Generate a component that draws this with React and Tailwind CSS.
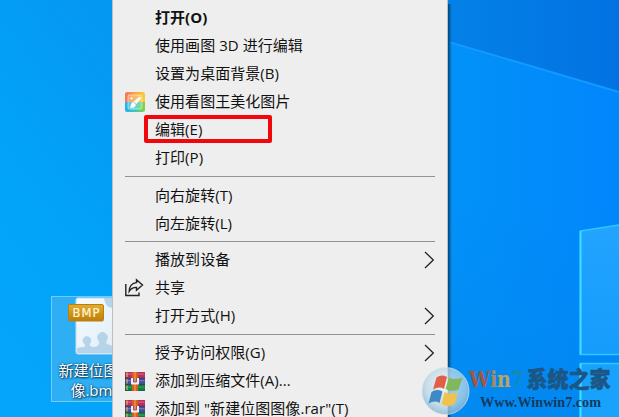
import React from 'react';

const FONT = "font-['Open_Sans','Noto_Sans_CJK_SC',sans-serif]";

function PictureKingIcon() {
  return (
    <svg width="20" height="20" viewBox="0 0 20 20">
      <defs>
        <clipPath id="pk">
          <rect width="20" height="20" rx="2" />
        </clipPath>
        <linearGradient id="pkTop" x1="0" y1="0" x2="1" y2="0">
          <stop offset="0" stopColor="#f0785e" />
          <stop offset=".5" stopColor="#fba63c" />
          <stop offset="1" stopColor="#f6d02c" />
        </linearGradient>
        <linearGradient id="pkBottom" x1="0" y1="0" x2="1" y2="0">
          <stop offset="0" stopColor="#25aef0" />
          <stop offset=".5" stopColor="#3cc7c0" />
          <stop offset="1" stopColor="#86d239" />
        </linearGradient>
      </defs>
      <g clipPath="url(#pk)">
        <rect width="20" height="11" fill="url(#pkTop)" />
        <rect y="10" width="20" height="10" fill="url(#pkBottom)" />
        <rect x="3" y="3" width="14" height="14" rx="1.5" fill="#fff" fillOpacity=".22" stroke="#fff" strokeOpacity=".5" />
        <path d="M14.800 4.500 8.600 9.400l2.600 2.600 4.900-5.600z" fill="#fff" />
        <path d="M8.200 10c-2.400.3-1.600 2.900-3.400 5.600 3 .6 6.200-.3 5.900-3.200z" fill="#fff" />
        <circle cx="6.500" cy="6.300" r="1.200" fill="#fff" fillOpacity=".8" />
      </g>
    </svg>
  );
}

function ShareIcon() {
  return (
    <svg width="20" height="20" viewBox="0 0 20 20" fill="none" stroke="#222" strokeWidth="1.400">
      <path d="M.8 6v11.500h13.200V14.500" />
      <path d="M11.500 1.800l6 5.200-6 5.200V9.400C8.300 9.200 6 10.700 4.200 13.300 4.400 8.600 7 4.900 11.500 4.600z" />
    </svg>
  );
}

function RarIcon() {
  return (
    <svg width="20" height="19" viewBox="0 0 20 19">
      <rect width="20" height="19" fill="#4a3540" />
      <rect x=".5" width="19.500" height="5.700" fill="#b9305a" />
      <rect x=".5" y="1.500" width="19" height="1.300" fill="#d9577c" />
      <rect x=".5" y="6.500" width="19.500" height="5.700" fill="#454c9c" />
      <rect x=".5" y="8" width="19" height="1.300" fill="#6d74bd" />
      <rect x=".5" y="13" width="19.500" height="5.600" fill="#0f8043" />
      <rect x=".5" y="14.500" width="19" height="1.300" fill="#2fa05a" />
      <path d="M2 .5v4.500M2 7v4.500M2 13.500v4.500" stroke="#e5c765" strokeWidth="1" />
      <rect x="7" width="6" height="19" fill="#d2601e" />
      <rect x="9" width="2" height="19" fill="#e98235" />
      <rect x="6" y="6" width="8" height="6.500" fill="#f6eeee" />
      <path d="M8.500 6v4h3V6" fill="#d98a7a" stroke="#8f4a55" strokeWidth=".9" />
    </svg>
  );
}

function Chevron() {
  return (
    <svg width="11" height="18" viewBox="0 0 11 18" className="mt-[-1px]" fill="none" stroke="#222" strokeWidth="1.300">
      <path d="M1 1l8.300 8L1 17" />
    </svg>
  );
}

function Item({ label, icon, arrow, bold }) {
  return (
    <div className="flex h-7 shrink-0 items-center pr-3 pl-3">
      <span className="flex w-[30px] shrink-0 items-center">{icon}</span>
      <span className={`-mt-px flex-1 whitespace-pre text-[15px] leading-[27px] tracking-[0.05px] text-[#111] ${bold ? 'font-bold' : ''}`}>{label}</span>
      {arrow && <Chevron />}
    </div>
  );
}

function Separator({ className }) {
  return (
    <div className={`shrink-0 pr-3 pl-3 ${className}`}>
      <div className="h-px bg-[#929292]" />
    </div>
  );
}

function ContextMenu() {
  return (
    <div className="absolute top-0 left-[112px] flex h-[417px] w-[336px] flex-col border-x border-[#b9bfc4] bg-[#eeeeee] pt-1">
      <Item label="打开(O)" bold />
      <Item label="使用画图 3D 进行编辑" />
      <Item label="设置为桌面背景(B)" />
      <Item label="使用看图王美化图片" icon={<PictureKingIcon />} />
      <Item label="编辑(E)" />
      <Item label="打印(P)" />
      <Separator className="h-[10px] pt-1" />
      <Item label="向右旋转(T)" />
      <Item label="向左旋转(L)" />
      <Separator className="h-2 pt-[3px]" />
      <Item label="播放到设备" arrow />
      <Item label="共享" icon={<ShareIcon />} />
      <Item label="打开方式(H)" arrow />
      <Separator className="h-[9px] pt-1" />
      <Item label="授予访问权限(G)" arrow />
      <Item label="添加到压缩文件(A)..." icon={<RarIcon />} />
      <Item label={'添加到 "新建位图图像.rar"(T)'} icon={<RarIcon />} />
      <div className="absolute top-[115px] left-[31px] h-[28px] w-[128px] rounded-[2px] border-4 border-[#f0060c]" />
    </div>
  );
}

function Wallpaper() {
  return (
    <svg className="absolute inset-0" width="619" height="417" viewBox="0 0 619 417">
      <defs>
        <linearGradient id="left" x1=".7" y1="0" x2=".3" y2="1">
          <stop offset="0" stopColor="#0598f3" />
          <stop offset=".6" stopColor="#02a4fa" />
          <stop offset="1" stopColor="#04a5fa" />
        </linearGradient>
        <linearGradient id="sky" x1="0" y1="0" x2="1" y2="0">
          <stop offset="0" stopColor="#0482e8" />
          <stop offset="1" stopColor="#0272e2" />
        </linearGradient>
        <linearGradient id="beam" x1="0" y1="0" x2="1" y2="0">
          <stop offset="0" stopColor="#0292f8" />
          <stop offset="1" stopColor="#0286fc" />
        </linearGradient>
        <linearGradient id="low" x1="0" y1="0" x2="0" y2="1">
          <stop offset="0" stopColor="#0288f0" stopOpacity="0" />
          <stop offset="1" stopColor="#0288ee" stopOpacity=".8" />
        </linearGradient>
        <linearGradient id="shade" x1="0" y1="0" x2="1" y2="0">
          <stop offset="0" stopColor="#003860" stopOpacity=".9" />
          <stop offset="1" stopColor="#004a80" stopOpacity="0" />
        </linearGradient>
        <linearGradient id="pane" x1="0" y1="0" x2="0" y2="1">
          <stop offset="0" stopColor="#22a4ff" />
          <stop offset="1" stopColor="#169cfc" />
        </linearGradient>
      </defs>
      <rect width="120" height="417" fill="url(#left)" />
      <rect x="440" width="179" height="100" fill="url(#sky)" />
      <path d="M440 39.500 619 92v325H440z" fill="url(#beam)" />
      <rect x="440" y="200" width="179" height="217" fill="url(#low)" />
      <path d="M447 41.500 619 92" stroke="#119aff" strokeWidth="2" />
      <path d="M580.500 231 622 224.500V354.500H580.500z" fill="url(#pane)" stroke="#2fc8fd" strokeWidth="1.500" />
      <path d="M580.500 363.500H622V420H580.500z" fill="#18a2fc" stroke="#2fc8fd" strokeWidth="1.500" />
      <path d="M580.500 231v123.500M580.500 363.500V417" stroke="#3fdcff" strokeWidth="2" />
      <rect x="448" y="4" width="4" height="413" fill="url(#shade)" />
    </svg>
  );
}

function DesktopFile() {
  return (
    <div className="absolute top-[296px] left-[51px] h-[106px] w-[92px] border border-[#73cbfa] bg-[#4bb5ee]/60">
      <svg className="absolute top-0 left-[16px]" width="60" height="62" viewBox="0 0 60 62">
        <defs>
          <linearGradient id="gold" x1="0" y1="0" x2="0" y2="1">
            <stop offset="0" stopColor="#e4ae2c" />
            <stop offset="1" stopColor="#bd7e0c" />
          </linearGradient>
          <linearGradient id="page" x1="0" y1="0" x2="1" y2="1">
            <stop offset="0" stopColor="#f6fbfe" />
            <stop offset="1" stopColor="#dcebf6" />
          </linearGradient>
        </defs>
        <path d="M8 3q0-2 2-2h50v56H10q-2 0-2-2z" fill="url(#page)" stroke="#c3def0" />
        <path d="M9 56V51q4-1 7-1 2-1 .5-3a4.300 4.300 0 1 1 5.500-.5q-1 3 3 3.500 5 0 6-3 1-2-1-4a5.200 5.200 0 1 1 9 0q-2 3 1 4.500 3 1.500 7 1V56z" fill="#b5d3e9" />
        <path d="M36 1q1 10 10 10V1z" fill="#b5d3e9" />
        <rect x=".5" y="7.500" width="35" height="16.500" rx="1.500" fill="url(#gold)" stroke="#b9800f" />
        <text x="18" y="20" textAnchor="middle" textLength="27" fontFamily="DejaVu Sans" fontSize="11.500" fill="#fff6d8" stroke="#fff6d8" strokeWidth=".2">BMP</text>
      </svg>
      <div className="absolute top-[63px] left-[5px] w-[78px] text-center text-[15px] leading-5 whitespace-nowrap text-white [text-shadow:1px_1px_2px_#003050,0_0_2px_#003050]">
        新建位图图
        <br />
        像.bmp
      </div>
    </div>
  );
}

function Watermark() {
  return (
    <svg className="absolute top-[364px] left-[418px] overflow-visible" width="201" height="53" viewBox="0 0 201 53">
      <defs>
        <radialGradient id="orb" cx=".5" cy=".4" r=".6">
          <stop offset="0" stopColor="#f4f9fc" stopOpacity=".65" />
          <stop offset=".7" stopColor="#b8d6e6" stopOpacity=".75" />
          <stop offset="1" stopColor="#85b5d2" stopOpacity=".8" />
        </radialGradient>
      </defs>
      <ellipse cx="27.500" cy="27" rx="23.500" ry="23.500" fill="url(#orb)" stroke="#d6e4eb" strokeOpacity=".7" />
      <path d="M18.500 13.500q5-3.500 10.500-.5l-3 12q-5-3-11 .5z" fill="#df6045" />
      <path d="M31 13.500q6 3 13.500 0l-4 12q-7 3-13-.5z" fill="#82b85a" />
      <path d="M13.500 28q5-3.500 11-.5l-3 11.500q-5-3-11 .5z" fill="#3f89c5" />
      <path d="M26.500 28q6 3 13.500.5l-3.500 12q-7 3-13-.5z" fill="#efc34b" />
      <text y="22.500" fontFamily="DejaVu Serif" fontWeight="bold" fontSize="22.500" textLength="55" lengthAdjust="spacingAndGlyphs" x="51">
        <tspan fill="#a8543f">W</tspan>
        <tspan fill="#aa8a58">i</tspan>
        <tspan fill="#bfa35a">n</tspan>
        <tspan fill="#158cae">7</tspan>
      </text>
      <text x="108.500" y="22.500" fontFamily="Noto Sans CJK SC" fontWeight="900" fontSize="21.500" textLength="84" lengthAdjust="spacingAndGlyphs" fill="#1b5684" stroke="#1b5684" strokeWidth=".5">系统之家</text>
      <text x="62" y="43" fontFamily="Liberation Serif" fontWeight="bold" fontSize="15.500" textLength="121" lengthAdjust="spacingAndGlyphs" fill="#133b62">Www.Winwin7.com</text>
    </svg>
  );
}

export default function App() {
  return (
    <main className={`relative h-[417px] w-[619px] overflow-hidden bg-[#0292f8] ${FONT}`}>
      <Wallpaper />
      <DesktopFile />
      <ContextMenu />
      <Watermark />
    </main>
  );
}
